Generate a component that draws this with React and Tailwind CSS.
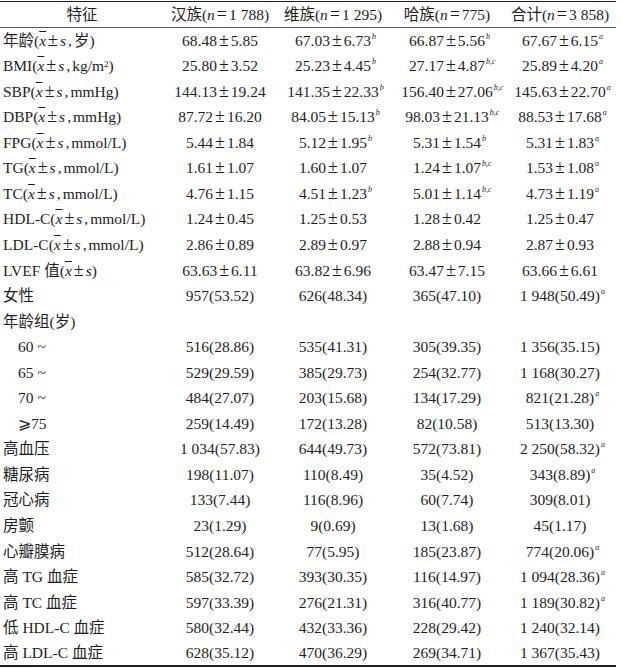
const X = () => (
  <>
    <span className="italic overline">x</span>
    <Pm />
    <span className="italic">s</span>
  </>
)

function Pm() {
  return <span className="mx-[2px] text-[18px] leading-none">±</span>
}

function Val({ text, sup }) {
  if (!text) return null
  const parts = text.split('±')
  return (
    <span className="relative">
      {parts.length === 2 ? (
        <>
          {parts[0]}
          <Pm />
          {parts[1]}
        </>
      ) : (
        text
      )}
      {sup && (
        <span className="absolute left-full top-[1px] pl-[1px] text-[8px] italic leading-none">{sup}</span>
      )}
    </span>
  )
}

const Comma = () => <span className="mx-[2px]">,</span>

const rows = [
  [<>年龄(<X /><Comma />岁)</>, ['68.48±5.85'], ['67.03±6.73', 'b'], ['66.87±5.56', 'b'], ['67.67±6.15', 'a']],
  [<>BMI(<X /><Comma />kg/m<sup className="text-[9px]">2</sup>)</>, ['25.80±3.52'], ['25.23±4.45', 'b'], ['27.17±4.87', 'b,c'], ['25.89±4.20', 'a']],
  [<>SBP(<X /><Comma />mmHg)</>, ['144.13±19.24'], ['141.35±22.33', 'b'], ['156.40±27.06', 'b,c'], ['145.63±22.70', 'a']],
  [<>DBP(<X /><Comma />mmHg)</>, ['87.72±16.20'], ['84.05±15.13', 'b'], ['98.03±21.13', 'b,c'], ['88.53±17.68', 'a']],
  [<>FPG(<X /><Comma />mmol/L)</>, ['5.44±1.84'], ['5.12±1.95', 'b'], ['5.31±1.54', 'b'], ['5.31±1.83', 'a']],
  [<>TG(<X /><Comma />mmol/L)</>, ['1.61±1.07'], ['1.60±1.07'], ['1.24±1.07', 'b,c'], ['1.53±1.08', 'a']],
  [<>TC(<X /><Comma />mmol/L)</>, ['4.76±1.15'], ['4.51±1.23', 'b'], ['5.01±1.14', 'b,c'], ['4.73±1.19', 'a']],
  [<>HDL-C(<X /><Comma />mmol/L)</>, ['1.24±0.45'], ['1.25±0.53'], ['1.28±0.42'], ['1.25±0.47']],
  [<>LDL-C(<X /><Comma />mmol/L)</>, ['2.86±0.89'], ['2.89±0.97'], ['2.88±0.94'], ['2.87±0.93']],
  [<>LVEF 值(<X />)</>, ['63.63±6.11'], ['63.82±6.96'], ['63.47±7.15'], ['63.66±6.61']],
  ['女性', ['957(53.52)'], ['626(48.34)'], ['365(47.10)'], ['1 948(50.49)', 'a']],
  ['年龄组(岁)', [], [], [], []],
  [<span className="pl-[15px]">60 ~</span>, ['516(28.86)'], ['535(41.31)'], ['305(39.35)'], ['1 356(35.15)']],
  [<span className="pl-[15px]">65 ~</span>, ['529(29.59)'], ['385(29.73)'], ['254(32.77)'], ['1 168(30.27)']],
  [<span className="pl-[15px]">70 ~</span>, ['484(27.07)'], ['203(15.68)'], ['134(17.29)'], ['821(21.28)', 'a']],
  [<span className="pl-[15px]">⩾75</span>, ['259(14.49)'], ['172(13.28)'], ['82(10.58)'], ['513(13.30)']],
  ['高血压', ['1 034(57.83)'], ['644(49.73)'], ['572(73.81)'], ['2 250(58.32)', 'a']],
  ['糖尿病', ['198(11.07)'], ['110(8.49)'], ['35(4.52)'], ['343(8.89)', 'a']],
  ['冠心病', ['133(7.44)'], ['116(8.96)'], ['60(7.74)'], ['309(8.01)']],
  ['房颤', ['23(1.29)'], ['9(0.69)'], ['13(1.68)'], ['45(1.17)']],
  ['心瓣膜病', ['512(28.64)'], ['77(5.95)'], ['185(23.87)'], ['774(20.06)', 'a']],
  ['高 TG 血症', ['585(32.72)'], ['393(30.35)'], ['116(14.97)'], ['1 094(28.36)', 'a']],
  ['高 TC 血症', ['597(33.39)'], ['276(21.31)'], ['316(40.77)'], ['1 189(30.82)', 'a']],
  ['低 HDL-C 血症', ['580(32.44)'], ['432(33.36)'], ['228(29.42)'], ['1 240(32.14)']],
  ['高 LDL-C 血症', ['628(35.12)'], ['470(36.29)'], ['269(34.71)'], ['1 367(35.43)']],
]

const headers = [
  ['汉族', '1 788'],
  ['维族', '1 295'],
  ['哈族', '775'],
  ['合计', '3 858'],
]

export default function App() {
  return (
    <div
      className="w-[622px] h-[668px] bg-white text-[#1e1e1e] text-[15.5px] pt-px"
      style={{ fontFamily: '"Liberation Serif", "Noto Sans CJK SC", serif' }}
    >
      <table className="w-[616px] table-fixed border-collapse">
        <colgroup>
          <col className="w-[164px]" />
          <col className="w-[112px]" />
          <col className="w-[114px]" />
          <col className="w-[114px]" />
          <col className="w-[112px]" />
        </colgroup>
        <thead>
          <tr className="h-[26px] border-t-[1.5px] border-b border-t-[#1e1e1e] border-b-[#555]">
            <th className="font-normal text-center">特征</th>
            {headers.map(([name, n]) => (
              <th key={name} className="font-normal text-center whitespace-nowrap">
                {name}(<span className="italic">n</span>
                <span className="mx-[2px] text-[18px] leading-none">=</span>
                {n})
              </th>
            ))}
          </tr>
        </thead>
        <tbody className="border-b-2 border-b-[#1e1e1e]">
          {rows.map(([label, ...vals], i) => (
            <tr key={i} className="h-[25.56px]">
              <td className="pl-[3px] whitespace-nowrap">{label}</td>
              {vals.map(([t, sup], j) => (
                <td key={j} className="text-center whitespace-nowrap">
                  <Val text={t} sup={sup} />
                </td>
              ))}
            </tr>
          ))}
        </tbody>
      </table>
    </div>
  )
}
